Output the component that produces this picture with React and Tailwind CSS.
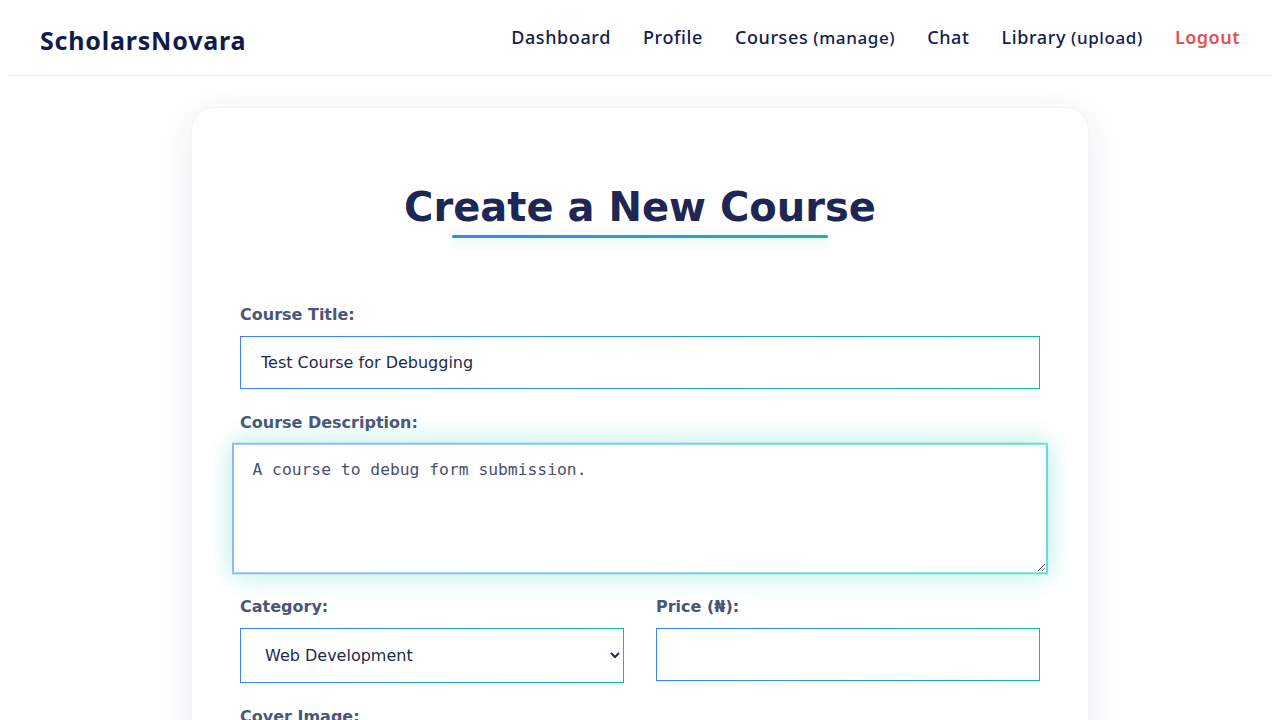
import React from 'react';

const navFont = { fontFamily: '"Noto Sans", "Open Sans", sans-serif' };

function NavLink({ children, small }) {
    return (
        <a href="#" className="text-[18px] font-medium text-[#13204d] tracking-[0.6px]" style={navFont}>
            {children}
            {small && <span className="text-[17px]"> {small}</span>}
        </a>
    );
}

function Label({ children }) {
    return (
        <label className="block pt-[1px] text-[16px] leading-6 font-bold text-[#4b5578] mb-[9px]">{children}</label>
    );
}

const gradientBorder = '[border-image:linear-gradient(to_right,#3b82f6,#14b8a6)_1]';

export default function App() {
    return (
        <div className="min-h-screen bg-white font-['DejaVu_Sans',sans-serif]">
            <div className="px-2">
                <header className="h-[76px] px-8 flex items-center justify-between border-b border-[#ececef]">
                    <div
                        className="text-[25px] font-bold text-[#0f1b4c] tracking-[0.8px] pt-[6px]"
                        style={{ fontFamily: '"Noto Sans", sans-serif' }}
                    >
                        ScholarsNovara
                    </div>
                    <nav className="flex items-center gap-8">
                        <NavLink>Dashboard</NavLink>
                        <NavLink>Profile</NavLink>
                        <NavLink small="(manage)">Courses</NavLink>
                        <NavLink>Chat</NavLink>
                        <NavLink small="(upload)">Library</NavLink>
                        <a href="#" className="text-[18px] font-semibold text-[#e05252] tracking-[0.5px]" style={navFont}>
                            Logout
                        </a>
                    </nav>
                </header>
            </div>

            <main className="pt-[31px] pb-16">
                <div className="w-[898px] mx-auto bg-white rounded-3xl border border-[#f4f5f8] shadow-[0_8px_40px_rgba(30,40,90,0.09)] p-12">
                    <div className="flex flex-col items-center pt-[27px]">
                        <h2 className="text-[40px] leading-[48px] font-bold text-[#1e2654]">Create a New Course</h2>
                        <div className="mt-[4px] w-[376px] h-[3px] rounded-full bg-gradient-to-r from-[#3b82f6] to-[#14b8a6] shadow-[0_4px_14px_rgba(20,184,166,0.35)]" />
                    </div>

                    <form className="mt-16">
                        <div className="mb-[21px]">
                            <Label>Course Title:</Label>
                            <input
                                type="text"
                                defaultValue="Test Course for Debugging"
                                className={`w-full h-[53px] px-5 border bg-white text-[16px] text-[#1e2a4a] outline-none ${gradientBorder}`}
                            />
                        </div>

                        <div className="mb-[21px]">
                            <Label>Course Description:</Label>
                            <textarea
                                defaultValue="A course to debug form submission."
                                className="block w-full h-[129px] px-[18px] pt-[13px] pb-3 border-2 rounded-md bg-white text-[16px] leading-6 text-[#4a5070] font-['DejaVu_Sans_Mono',monospace] outline-none scale-[1.02] shadow-[0_0_26px_rgba(45,212,191,0.38)] [border-image:linear-gradient(to_right,#8fb8fb,#62e2cc)_1]"
                            />
                        </div>

                        <div className="grid grid-cols-2 gap-8 mb-[21px]">
                            <div>
                                <Label>Category:</Label>
                                <select
                                    defaultValue="web"
                                    className={`w-full h-[55px] px-5 border bg-white text-[16px] text-[#1e2a4a] outline-none ${gradientBorder}`}
                                >
                                    <option value="web">Web Development</option>
                                    <option value="data">Data Science</option>
                                    <option value="design">Design</option>
                                </select>
                            </div>
                            <div>
                                <Label>Price (₦):</Label>
                                <input
                                    type="number"
                                    className={`w-full h-[53px] px-5 border bg-white text-[16px] text-[#1e2a4a] outline-none ${gradientBorder}`}
                                />
                            </div>
                        </div>

                        <div className="mb-[21px]">
                            <Label>Cover Image:</Label>
                            <input
                                type="file"
                                className={`w-full h-[53px] px-5 py-3 border bg-white text-[16px] text-[#1e2a4a] ${gradientBorder}`}
                            />
                        </div>

                        <button
                            type="button"
                            className="w-full h-[54px] bg-gradient-to-r from-[#3b82f6] to-[#14b8a6] text-white font-bold text-[17px]"
                        >
                            Create Course
                        </button>
                    </form>
                </div>
            </main>
        </div>
    );
}
